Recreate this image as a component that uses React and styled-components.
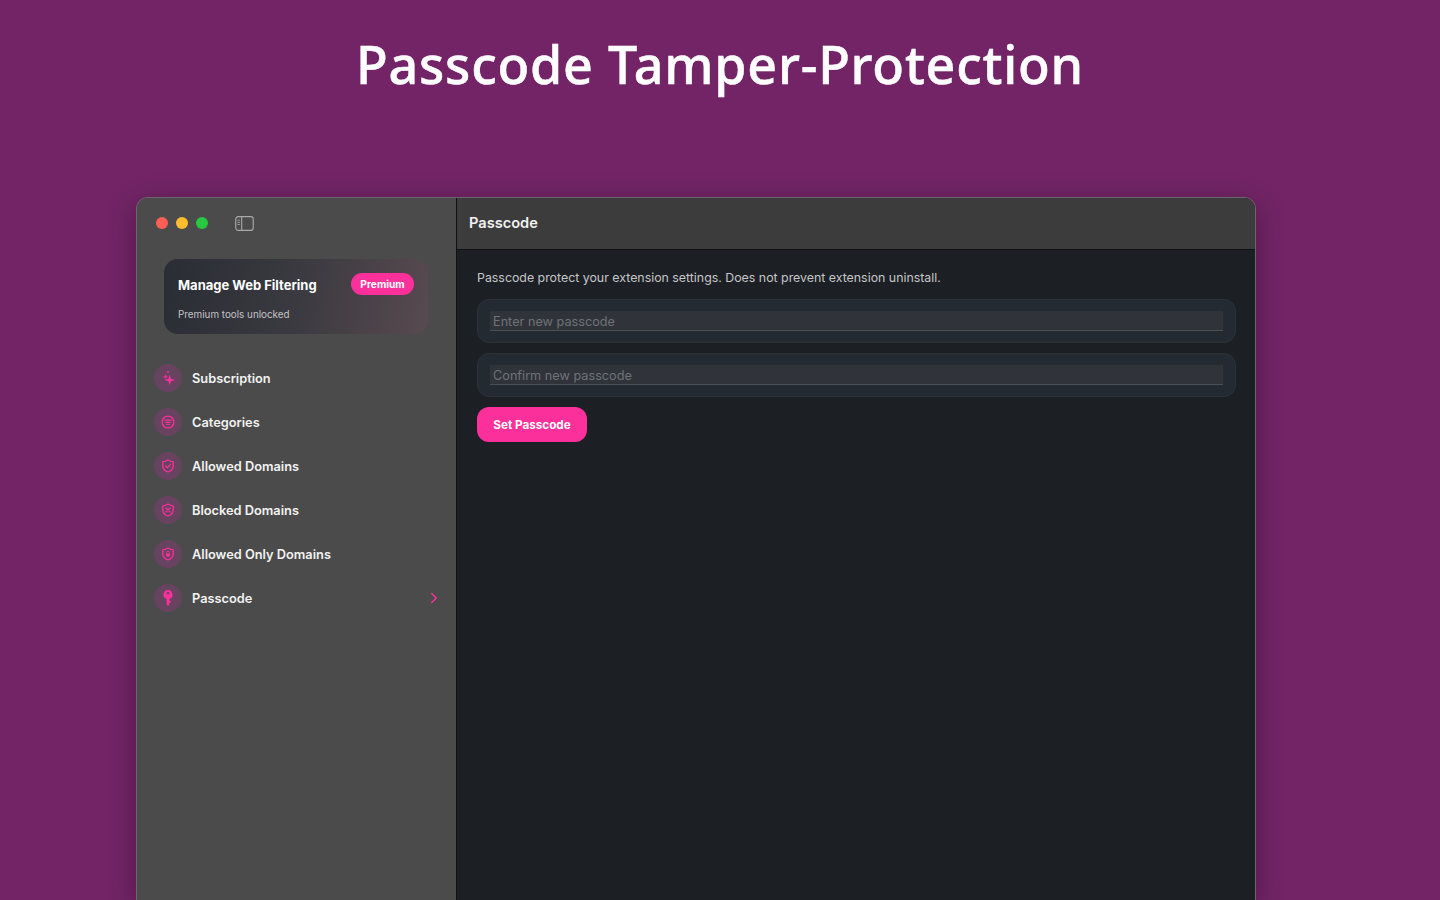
import React from "react";
import styled, { createGlobalStyle } from "styled-components";
import { ChevronRight } from "lucide-react";

const GlobalStyle = createGlobalStyle`
  html, body {
    margin: 0;
    padding: 0;
    height: 100%;
    overflow: hidden;
    background: #722466;
  }
  * {
    box-sizing: border-box;
  }
`;

const Page = styled.div`
  height: 900px;
  overflow: hidden;
  display: flex;
  flex-direction: column;
  align-items: center;
`;

const Headline = styled.h1`
  margin: 0;
  height: 197px;
  padding-top: 29px;
  font-family: "Noto Sans", sans-serif;
  font-weight: 500;
  font-size: 52px;
  letter-spacing: 0.77px;
  line-height: 70px;
  color: #fff;
  -webkit-text-stroke: 0.5px #fff;
`;

const Window = styled.div`
  flex: 1;
  width: 1120px;
  align-self: flex-start;
  margin-left: 136px;
  display: flex;
  border: 1px solid #6c666c;
  border-bottom: none;
  border-radius: 12px 12px 0 0;
  overflow: hidden;
  box-shadow: 0 8px 30px rgba(0, 0, 0, 0.3);
  font-family: Inter, sans-serif;
`;

const Sidebar = styled.aside`
  width: 320px;
  flex-shrink: 0;
  background: #4b4b4b;
  border-right: 1px solid #111;
  padding: 0 17px;
`;

const TitleBar = styled.div`
  height: 50px;
  display: flex;
  align-items: center;
  padding-left: 2px;
  gap: 8px;
`;

const Light = styled.span`
  width: 12px;
  height: 12px;
  border-radius: 50%;
  background: ${(p) => p.$color};
`;

const ToggleIcon = styled.svg`
  width: 19px;
  height: 15px;
  margin-left: 19px;
`;

const PremiumCard = styled.div`
  margin: 11px 10px 0;
  height: 75px;
  width: 264px;
  padding: 14px 14px 0;
  border-radius: 14px;
  background: linear-gradient(100deg, #2a2d34 0%, #3a3a40 50%, #584a50 100%);
`;

const CardTop = styled.div`
  display: flex;
  align-items: center;
  justify-content: space-between;
`;

const CardTitle = styled.div`
  padding-top: 1px;
  font-size: 13px;
  font-weight: 700;
  color: #fff;
`;

const Badge = styled.span`
  width: 63px;
  height: 22px;
  border-radius: 11px;
  background: #fb309b;
  color: #fff;
  font-size: 10.2px;
  font-weight: 700;
  display: flex;
  align-items: center;
  justify-content: center;
`;

const CardText = styled.div`
  margin-top: 13px;
  font-size: 9.85px;
  font-weight: 400;
  color: #c4c4c8;
`;

const Nav = styled.nav`
  margin-top: 30px;
  display: flex;
  flex-direction: column;
  gap: 16px;
`;

const NavRow = styled.div`
  height: 28px;
  display: flex;
  align-items: center;
  gap: 10px;
  font-size: 12.8px;
  font-weight: 600;
  color: #f2f2f2;
`;

const IconDisc = styled.span`
  width: 28px;
  height: 28px;
  border-radius: 50%;
  background: #674360;
  display: flex;
  align-items: center;
  justify-content: center;
  svg {
    width: 14px;
    height: 14px;
    overflow: visible;
    fill: none;
    stroke: #fb309b;
    stroke-width: 1.3;
    stroke-linecap: round;
    stroke-linejoin: round;
  }
`;

const RowArrow = styled(ChevronRight)`
  margin-left: auto;
  margin-right: -4px;
  color: #fb309b;
`;

const Main = styled.main`
  flex: 1;
  display: flex;
  flex-direction: column;
  background: #1c1f23;
`;

const MainHeader = styled.header`
  height: 52px;
  flex-shrink: 0;
  display: flex;
  align-items: center;
  padding: 0 0 1px 12px;
  background: #3c3c3c;
  border-bottom: 1px solid #111;
  font-size: 14.6px;
  font-weight: 600;
  color: #f2f2f2;
`;

const MainBody = styled.div`
  padding: 20px 19px 0 20px;
  display: flex;
  flex-direction: column;
  gap: 10px;
`;

const Intro = styled.p`
  margin: 0 0 3px;
  height: 16px;
  font-size: 12.37px;
  line-height: 16px;
  color: #c6c7c9;
`;

const Field = styled.div`
  height: 44px;
  padding: 0 12px;
  display: flex;
  align-items: center;
  border-radius: 12px;
  background: #242a31;
  border: 1px solid #2c3238;
`;

const PasscodeInput = styled.input`
  width: 100%;
  height: 20px;
  padding: 1px 3px 0;
  border: none;
  border-bottom: 1px solid #4c4f55;
  outline: none;
  background: #30343a;
  color: #eee;
  font-family: Inter, sans-serif;
  font-size: 12.7px;
  &::placeholder {
    color: #6f7277;
    opacity: 1;
  }
`;

const SetButton = styled.button`
  width: 110px;
  height: 35px;
  border: none;
  border-radius: 12px;
  background: #fb309b;
  color: #fff;
  font-family: Inter, sans-serif;
  font-size: 11.7px;
  font-weight: 700;
  align-self: flex-start;
`;

const Sparkles = () => (
  <svg viewBox="0 0 14 14">
    <path
      d="M8.7 3.6 9.9 7.8 14.1 9 9.9 10.2 8.7 14.4 7.5 10.2 3.3 9 7.5 7.8Z"
      fill="#fb309b"
      stroke="none"
    />
    <path
      d="M4.6 3.3 5.4 5 7 5.7 5.4 6.4 4.6 8.1 3.8 6.4 2.2 5.7 3.8 5Z"
      fill="#fb309b"
      stroke="none"
    />
    <circle cx="7" cy="1" r="0.9" fill="#fb309b" stroke="none" />
  </svg>
);

const CategoryIcon = () => (
  <svg viewBox="0 0 14 14">
    <circle cx="7" cy="7" r="5.9" />
    <path d="M3.9 5.2h6.2M4.9 7.3h4.2M5.9 9.4h2.2" />
  </svg>
);

const shield = "M7 1C8.6 2 10.4 2.6 12.2 2.8V7c0 3-2.2 5-5.2 6C4 12 1.8 10 1.8 7V2.8C3.6 2.6 5.4 2 7 1Z";

const ShieldCheck = () => (
  <svg viewBox="0 0 14 14">
    <path d={shield} />
    <path d="M4.7 7 6.4 8.7 9.5 5.4" />
  </svg>
);

const ShieldCross = () => (
  <svg viewBox="0 0 14 14">
    <path d={shield} />
    <path d="M5 5 9 9M9 5 5 9" />
  </svg>
);

const ShieldLock = () => (
  <svg viewBox="0 0 14 14">
    <path d={shield} />
    <path d="M5.6 6.4V5.6a1.4 1.4 0 0 1 2.8 0v.8" strokeWidth="0.9" />
    <rect x="5" y="6.5" width="4" height="3" rx="0.5" fill="#fb309b" stroke="none" />
  </svg>
);

const KeyIcon = () => (
  <svg viewBox="0 0 14 14" style={{ width: 16, height: 18 }}>
    <path
      fillRule="evenodd"
      d="M7 0a4 4 0 0 1 1.2 7.8V9.6H9.6V11H8.2v1.2L7.1 14 5.8 12.6V7.8A4 4 0 0 1 7 0ZM7 1.8a1.1 1.1 0 1 0 0 2.2 1.1 1.1 0 0 0 0-2.2Z"
      fill="#fb309b"
      stroke="none"
    />
  </svg>
);

const menu = [
  { label: "Subscription", Icon: Sparkles },
  { label: "Categories", Icon: CategoryIcon },
  { label: "Allowed Domains", Icon: ShieldCheck },
  { label: "Blocked Domains", Icon: ShieldCross },
  { label: "Allowed Only Domains", Icon: ShieldLock },
  { label: "Passcode", Icon: KeyIcon, active: true },
];

export default function App() {
  return (
    <Page>
      <GlobalStyle />
      <Headline>Passcode Tamper-Protection</Headline>
      <Window>
        <Sidebar>
          <TitleBar>
            <Light $color="#ff5f57" />
            <Light $color="#febc2e" />
            <Light $color="#28c840" />
            <ToggleIcon viewBox="0 0 20 16" fill="none">
              <rect x="0.7" y="0.7" width="18.6" height="14.6" rx="2.5" stroke="#a9a9a9" strokeWidth="1.2" />
              <path d="M7 1v14" stroke="#a9a9a9" strokeWidth="1.2" />
              <path d="M2.5 4.5h2.5M2.5 6.8h2.5M2.5 9.1h2.5" stroke="#a9a9a9" strokeWidth="1" />
            </ToggleIcon>
          </TitleBar>
          <PremiumCard>
            <CardTop>
              <CardTitle>Manage Web Filtering</CardTitle>
              <Badge>Premium</Badge>
            </CardTop>
            <CardText>Premium tools unlocked</CardText>
          </PremiumCard>
          <Nav>
            {menu.map(({ label, Icon, active }) => (
              <NavRow key={label}>
                <IconDisc>
                  <Icon />
                </IconDisc>
                {label}
                {active && <RowArrow size={18} strokeWidth={2} />}
              </NavRow>
            ))}
          </Nav>
        </Sidebar>
        <Main>
          <MainHeader>Passcode</MainHeader>
          <MainBody>
            <Intro>Passcode protect your extension settings. Does not prevent extension uninstall.</Intro>
            <Field>
              <PasscodeInput type="password" placeholder="Enter new passcode" />
            </Field>
            <Field>
              <PasscodeInput type="password" placeholder="Confirm new passcode" />
            </Field>
            <SetButton>Set Passcode</SetButton>
          </MainBody>
        </Main>
      </Window>
    </Page>
  );
}
